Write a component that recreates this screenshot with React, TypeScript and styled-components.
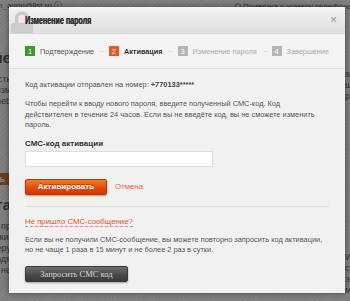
import React from "react";
import styled, { createGlobalStyle } from "styled-components";

const GlobalStyle = createGlobalStyle`
    html, body {
        margin: 0;
        padding: 0;
    }
    body {
        width: 350px;
        height: 301px;
        overflow: hidden;
        font-family: "Liberation Sans", Arial, sans-serif;
    }
`;

const steps = [
    { num: 1, label: "Подтверждение", state: "done" },
    { num: 2, label: "Активация", state: "active" },
    { num: 3, label: "Изменение пароля", state: "todo" },
    { num: 4, label: "Завершение", state: "todo" },
] as const;

type StepState = "done" | "active" | "todo";

export default function App() {
    return (
        <>
            <GlobalStyle />
            <Page>
                <TopBar>
                    <TopLeft>n_apop@list.ru ⓘ</TopLeft>
                    <TopRight>
                        <GreenDot /> Привязка к номеру телефона
                    </TopRight>
                </TopBar>
                <PageBody>
                    <SideColumn>
                        <BigWord>Безопасность и управление</BigWord>
                        <SideText>Ваша безопасность</SideText>
                        <SideText>Чтобы изм</SideText>
                        <SideText>Internet.</SideText>
                        <SideButton>Изменить</SideButton>
                        <BigWord>Номер телефона и почта</BigWord>
                        <SideText>Вы можете пр</SideText>
                        <SideText>Настройки:</SideText>
                        <SideText>По номеру</SideText>
                        <SideText>приходя</SideText>
                        <SideText>Мы не</SideText>
                    </SideColumn>
                    <Spacer />
                    <RightColumn>
                        <SideText>a</SideText>
                        <SideText>ш</SideText>
                        <SideText>ре</SideText>
                        <RightGap />
                        <SideText>W</SideText>
                        <SideText>ст</SideText>
                        <SideText>э</SideText>
                        <SideText>м</SideText>
                    </RightColumn>
                </PageBody>
                <Overlay />
                <Modal>
                    <ModalHeader>
                        <LockMark viewBox="0 0 24 28">
                            <path
                                d="M6.5 13V8.5a5.5 5.5 0 0 1 11 0V13"
                                fill="none"
                                stroke="#cccccc"
                                strokeWidth="3.5"
                            />
                            <rect x="1" y="13" width="22" height="15" rx="2" fill="#cccccc" />
                        </LockMark>
                        <ModalTitle>Изменение пароля</ModalTitle>
                        <CloseButton>×</CloseButton>
                    </ModalHeader>
                    <StepsBar>
                        {steps.map((step, index) => (
                            <React.Fragment key={step.num}>
                                {index > 0 && <StepDivider />}
                                <Step>
                                    <StepNum $state={step.state}>{step.num}</StepNum>
                                    <StepLabel $state={step.state}>{step.label}</StepLabel>
                                </Step>
                            </React.Fragment>
                        ))}
                    </StepsBar>
                    <ModalBody>
                        <Text>
                            Код активации отправлен на номер: <b>+770133*****</b>
                        </Text>
                        <Paragraph $gap={9}>
                            Чтобы перейти к вводу нового пароля, введите полученный СМС-код. Код
                            <br />
                            действителен в течение 24 часов. Если вы не введёте код, вы не сможете
                            изменить пароль.
                        </Paragraph>
                        <FieldLabel>СМС-код активации</FieldLabel>
                        <CodeInput type="text" />
                        <Actions>
                            <OrangeButton>Активировать</OrangeButton>
                            <CancelLink>Отмена</CancelLink>
                        </Actions>
                        <Separator />
                        <DashedLink>Не пришло СМС-сообщение?</DashedLink>
                        <Paragraph $gap={8}>
                            Если вы не получили СМС-сообщение, вы можете повторно запросить код
                            активации, но не чаще 1 раза в 15 минут и не более 2 раз в сутки.
                        </Paragraph>
                        <GrayButton>Запросить СМС код</GrayButton>
                    </ModalBody>
                </Modal>
            </Page>
        </>
    );
}

const Page = styled.div`
    position: relative;
    width: 350px;
    height: 301px;
    overflow: hidden;
    background: #f0f0f0;
    color: #333;
`;

const TopBar = styled.div`
    display: flex;
    height: 12px;
    font-size: 8px;
    line-height: 11px;
    white-space: nowrap;
    margin-left: -2px;
`;

const TopLeft = styled.span`
    width: 237px;
    flex-shrink: 0;
`;

const TopRight = styled.span`
    display: flex;
    align-items: center;
    gap: 2px;
`;

const GreenDot = styled.span`
    width: 6px;
    height: 6px;
    border-radius: 50%;
    border: 1px solid #3a9a2a;
    box-sizing: border-box;
`;

const PageBody = styled.div`
    display: flex;
`;

const SideColumn = styled.div`
    display: flex;
    flex-direction: column;
    align-items: flex-end;
    width: 11px;
    overflow: hidden;
    white-space: nowrap;
    padding-top: 36px;
`;

const BigWord = styled.div`
    font-size: 15px;
    font-weight: bold;
    line-height: 20px;
    margin-bottom: 6px;
`;

const SideText = styled.div`
    font-size: 9px;
    line-height: 11px;
`;

const SideButton = styled.div`
    margin: 66px 0 10px;
    padding: 1px 6px;
    font-size: 9px;
    font-weight: bold;
    color: #fff;
    background: #d5520f;
`;

const Spacer = styled.div`
    flex: 1;
`;

const RightColumn = styled.div`
    width: 5px;
    overflow: hidden;
    white-space: nowrap;
    padding-top: 57px;
`;

const RightGap = styled.div`
    height: 150px;
`;

const Overlay = styled.div`
    position: absolute;
    inset: 0;
    background:
        repeating-linear-gradient(135deg, rgba(255, 255, 255, 0.05) 0 1px, transparent 1px 3px),
        rgba(40, 40, 40, 0.58);
`;

const Modal = styled.div`
    position: absolute;
    left: 9px;
    top: 7px;
    width: 336px;
    height: 286px;
    display: flex;
    flex-direction: column;
    background: #f1f1f1;
    box-shadow: 0 0 6px rgba(0, 0, 0, 0.45);
    overflow: hidden;
`;

const ModalHeader = styled.div`
    position: relative;
    display: flex;
    align-items: center;
    height: 26px;
    padding: 0 16px;
    background: linear-gradient(#f4f4f4, #dedede);
    border-bottom: 1px solid #d6d6d6;
    overflow: hidden;
`;

const LockMark = styled.svg`
    position: absolute;
    left: 1px;
    top: 3px;
    width: 24px;
    height: 28px;
`;

const ModalTitle = styled.div`
    position: relative;
    flex: 1;
    font-size: 10.5px;
    font-weight: bold;
    color: #2e2e2e;
    transform: scaleX(0.68);
    transform-origin: left center;
    white-space: nowrap;
    text-shadow: 0.3px 0 0 #2e2e2e;
`;

const CloseButton = styled.div`
    font-size: 12px;
    color: #999;
    margin-right: -8px;
`;

const StepsBar = styled.div`
    display: flex;
    align-items: center;
    height: 34px;
    padding: 0 16px;
    background: #f4f4f4;
    border-bottom: 1px solid #e0e0e0;
    white-space: nowrap;
`;

const Step = styled.div`
    display: flex;
    align-items: center;
    gap: 5px;
`;

const stepColors: Record<StepState, string> = {
    done: "#3a9a2a",
    active: "#e8561e",
    todo: "#b5b5b5",
};

const StepNum = styled.span<{ $state: StepState }>`
    width: 10px;
    height: 10px;
    display: flex;
    align-items: center;
    justify-content: center;
    font-size: 7.5px;
    color: #fff;
    background: ${(props) => stepColors[props.$state]};
`;

const StepLabel = styled.span<{ $state: StepState }>`
    font-size: 7.3px;
    font-weight: ${(props) => (props.$state === "active" ? "bold" : "normal")};
    color: ${(props) =>
        props.$state === "todo" ? "#aaa" : props.$state === "active" ? "#333" : "#555"};
`;

const StepDivider = styled.span`
    width: 10px;
    height: 1px;
    margin: 0 4px 0 5px;
    background: #e2e2e2;
`;

const ModalBody = styled.div`
    display: flex;
    flex-direction: column;
    align-items: flex-start;
    padding: 11px 16px 0;
    font-size: 7.4px;
    color: #555;
`;

const Text = styled.div`
    line-height: 10px;
    b {
        color: #444;
    }
`;

const Paragraph = styled.p<{ $gap: number }>`
    margin: ${(props) => props.$gap}px 0 0;
    line-height: 10.5px;
    width: 305px;
`;

const FieldLabel = styled.div`
    margin-top: 8px;
    font-size: 8px;
    font-weight: bold;
    color: #333;
`;

const CodeInput = styled.input`
    box-sizing: border-box;
    width: 188px;
    height: 16px;
    margin: 3px 0 0;
    border: 1px solid #ddd;
    background: #fff;
    outline: none;
`;

const Actions = styled.div`
    display: flex;
    align-items: center;
    gap: 8px;
    margin-top: 12px;
`;

const OrangeButton = styled.button`
    box-sizing: border-box;
    width: 82px;
    height: 16px;
    padding: 0;
    border: 1px solid #b93600;
    border-radius: 2px;
    background: linear-gradient(#f77a2a, #e24a0a 55%, #c63a04);
    box-shadow: 0 1px 2px rgba(0, 0, 0, 0.35);
    color: #fff;
    font-family: "Liberation Sans", Arial, sans-serif;
    font-size: 8px;
    font-weight: bold;
    text-shadow: 0 -1px 0 rgba(0, 0, 0, 0.35);
`;

const CancelLink = styled.span`
    font-size: 7.8px;
    color: #e8693e;
`;

const Separator = styled.div`
    align-self: stretch;
    height: 1px;
    margin: 11px 0 0;
    background: #dedede;
`;

const DashedLink = styled.span`
    margin-top: 10px;
    font-size: 7.8px;
    color: #e5532a;
    border-bottom: 1px dashed #e8896a;
`;

const GrayButton = styled.button`
    box-sizing: border-box;
    width: 103px;
    height: 16px;
    margin-top: 10px;
    padding: 0;
    border: 1px solid #3a3a3a;
    border-radius: 2px;
    background: linear-gradient(#6e6e6e, #4a4a4a 55%, #3a3a3a);
    box-shadow: 0 1px 2px rgba(0, 0, 0, 0.35);
    color: #d8d8d8;
    font-family: "Liberation Serif", "Times New Roman", serif;
    font-size: 8.5px;
`;
